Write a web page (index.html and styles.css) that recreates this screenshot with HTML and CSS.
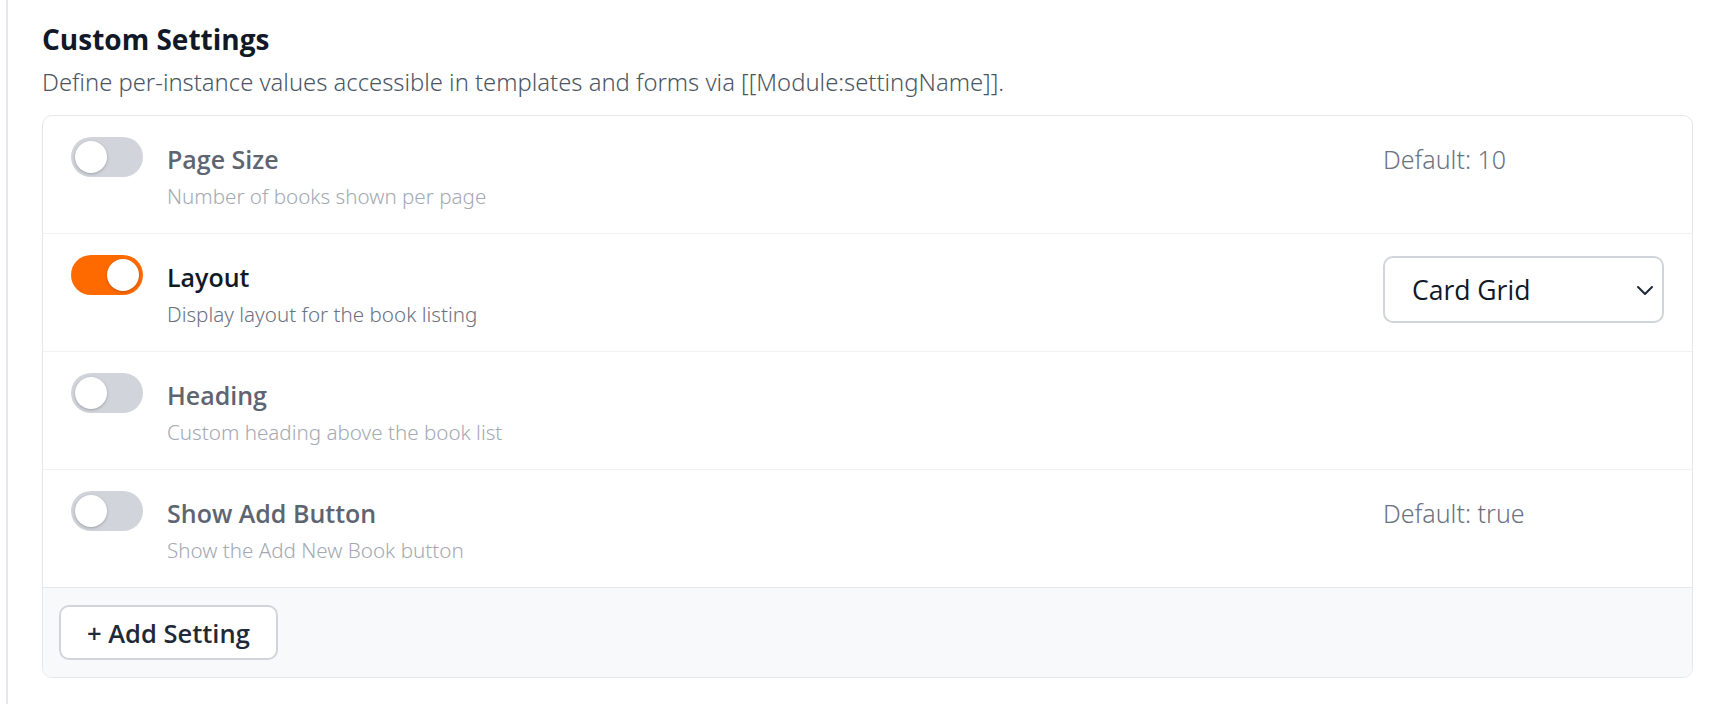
FILE: index.html
```html
<!DOCTYPE html>
<html lang="en">
<head>
<meta charset="utf-8">
<title>Custom Settings</title>
<link rel="stylesheet" href="styles.css">
</head>
<body>
<div class="page">
  <h2 class="title">Custom Settings</h2>
  <p class="subtitle">Define per-instance values accessible in templates and forms via [[Module:settingName]].</p>

  <div class="card">
    <div class="row">
      <span class="toggle"><span class="knob"></span></span>
      <div class="text">
        <div class="label">Page Size</div>
        <div class="desc">Number of books shown per page</div>
      </div>
      <div class="value"><span class="default">Default: 10</span></div>
    </div>

    <div class="row is-on">
      <span class="toggle on"><span class="knob"></span></span>
      <div class="text">
        <div class="label">Layout</div>
        <div class="desc">Display layout for the book listing</div>
      </div>
      <div class="value">
        <div class="select">
          <span class="select-text">Card Grid</span>
          <svg class="chevron" width="18" height="12" viewBox="0 0 18 12"><path d="M2 3l7 7 7-7" fill="none" stroke="#1f2937" stroke-width="2" stroke-linecap="round" stroke-linejoin="round"/></svg>
        </div>
      </div>
    </div>

    <div class="row">
      <span class="toggle"><span class="knob"></span></span>
      <div class="text">
        <div class="label">Heading</div>
        <div class="desc">Custom heading above the book list</div>
      </div>
      <div class="value"></div>
    </div>

    <div class="row">
      <span class="toggle"><span class="knob"></span></span>
      <div class="text">
        <div class="label">Show Add Button</div>
        <div class="desc">Show the Add New Book button</div>
      </div>
      <div class="value"><span class="default">Default: true</span></div>
    </div>

    <div class="footer">
      <button class="add-btn">+ Add Setting</button>
    </div>
  </div>
</div>
</body>
</html>
```

FILE: styles.css
```css
html, body {
  margin: 0;
  padding: 0;
  background: #ffffff;
}

body {
  font-family: "Open Sans", "Noto Sans", "Liberation Sans", sans-serif;
  color: #111827;
}

.page {
  margin-left: 6px;
  border-left: 2px solid #e5e7eb;
  min-height: 704px;
  box-sizing: border-box;
  padding: 21px 25px 0 34px;
}

.title {
  margin: 0;
  font-size: 28px;
  line-height: 36px;
  font-weight: 700;
  color: #111827;
}

.subtitle {
  margin: 10px 0 0;
  font-family: "Noto Sans", "Open Sans", sans-serif;
  font-size: 23.8px;
  line-height: 30px;
  font-weight: 300;
  color: #4b5563;
}

.card {
  margin-top: 18px;
  border: 1px solid #e5e7eb;
  border-radius: 10px;
  overflow: hidden;
  background: #ffffff;
}

.row {
  display: flex;
  align-items: flex-start;
  gap: 24px;
  padding: 21px 28px 22px;
  border-bottom: 1px solid #f1f2f4;
}

.toggle {
  flex: 0 0 auto;
  width: 72px;
  height: 40px;
  border-radius: 20px;
  background: #d1d5db;
  box-sizing: border-box;
  padding: 4px;
  display: flex;
  justify-content: flex-start;
}

.toggle.on {
  background: #ff6a00;
  justify-content: flex-end;
}

.knob {
  width: 32px;
  height: 32px;
  border-radius: 50%;
  background: #ffffff;
  box-shadow: 0 1px 3px rgba(0, 0, 0, 0.25);
}

.text {
  flex: 1 1 auto;
  display: flex;
  flex-direction: column;
}

.label {
  font-size: 25px;
  line-height: 44px;
  font-weight: 600;
  color: #5f6471;
}

.desc {
  font-family: "Noto Sans", "Open Sans", sans-serif;
  font-size: 20.6px;
  line-height: 30px;
  font-weight: 300;
  color: #a4a9b2;
}

.is-on .label {
  color: #111827;
}

.is-on .desc {
  color: #6b7280;
}

.value {
  flex: 0 0 281px;
  display: flex;
  flex-direction: column;
}

.default {
  font-family: "Noto Sans", "Open Sans", sans-serif;
  font-size: 25px;
  line-height: 44px;
  font-weight: 300;
  color: #6b7280;
}

.select {
  margin-top: 1px;
  height: 67px;
  box-sizing: border-box;
  border: 2px solid #d1d5db;
  border-radius: 10px;
  background: #ffffff;
  display: flex;
  align-items: center;
  justify-content: space-between;
  padding: 0 8px 0 27px;
}

.select-text {
  font-size: 26.5px;
  font-weight: 400;
  color: #111827;
}

.chevron {
  display: block;
}

.footer {
  background: #f8f9fb;
  border-top: 1px solid #e5e7eb;
  margin-top: -1px;
  padding: 17px 16px 17px;
}

.add-btn {
  display: block;
  height: 55px;
  box-sizing: border-box;
  padding: 0 26px;
  border: 2px solid #d1d5db;
  border-radius: 10px;
  background: #ffffff;
  font-family: inherit;
  font-size: 25.5px;
  font-weight: 600;
  color: #1f2937;
}
```
